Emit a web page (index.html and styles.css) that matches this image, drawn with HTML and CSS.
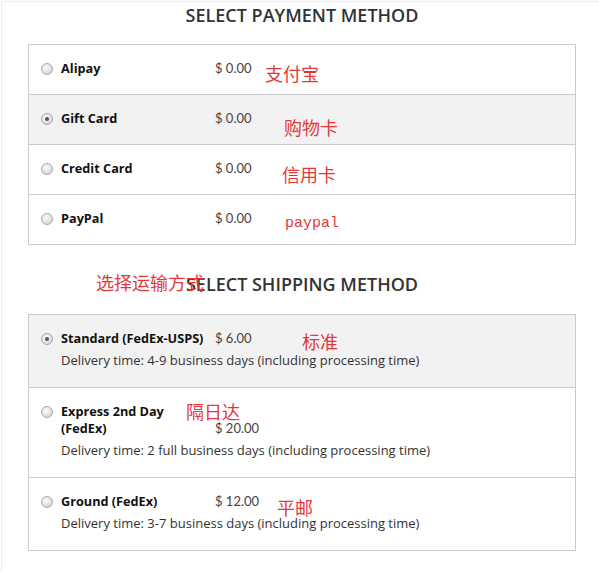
FILE: index.html
```html
<!DOCTYPE html>
<html lang="zh">
<head>
  <meta charset="UTF-8" />
  <meta name="viewport" content="width=device-width, initial-scale=1" />
  <title>Checkout - Payment &amp; Shipping</title>
  <link rel="stylesheet" href="styles.css">
</head>
<body>
  <div class="page">

    <section class="panel">
      <h2 class="panel-title">SELECT PAYMENT METHOD</h2>
      <ul class="options">
        <li class="option">
          <span class="radio"></span>
          <span class="name">Alipay</span>
          <span class="price">$ 0.00</span>
          <span class="note note-alipay">支付宝</span>
        </li>
        <li class="option selected">
          <span class="radio checked"></span>
          <span class="name">Gift Card</span>
          <span class="price">$ 0.00</span>
          <span class="note note-gift">购物卡</span>
        </li>
        <li class="option">
          <span class="radio"></span>
          <span class="name">Credit Card</span>
          <span class="price">$ 0.00</span>
          <span class="note note-credit">信用卡</span>
        </li>
        <li class="option">
          <span class="radio"></span>
          <span class="name">PayPal</span>
          <span class="price">$ 0.00</span>
          <span class="note note-paypal">paypal</span>
        </li>
      </ul>
    </section>

    <section class="panel">
      <h2 class="panel-title">
        SELECT SHIPPING METHOD
        <span class="note note-title">选择运输方式</span>
      </h2>
      <ul class="options shipping">
        <li class="option selected">
          <div class="line">
            <span class="radio checked"></span>
            <span class="name">Standard (FedEx-USPS)</span>
            <span class="price">$ 6.00</span>
          </div>
          <p class="delivery">Delivery time: 4-9 business days (including processing time)</p>
          <span class="note note-standard">标准</span>
        </li>
        <li class="option">
          <div class="line">
            <span class="radio"></span>
            <span class="name">Express 2nd Day<br />(FedEx)</span>
            <span class="price">$ 20.00</span>
          </div>
          <p class="delivery">Delivery time: 2 full business days (including processing time)</p>
          <span class="note note-express">隔日达</span>
        </li>
        <li class="option">
          <div class="line">
            <span class="radio"></span>
            <span class="name">Ground (FedEx)</span>
            <span class="price">$ 12.00</span>
          </div>
          <p class="delivery">Delivery time: 3-7 business days (including processing time)</p>
          <span class="note note-ground">平邮</span>
        </li>
      </ul>
    </section>

  </div>
</body>
</html>
```

FILE: styles.css
```css
body {
  margin: 0;
  background: #fff;
  font-family: "Open Sans", "Liberation Sans", sans-serif;
  color: #222;
}
.page {
  margin: 1px 0 0 1px;
  border-top: 1px solid #ececec;
  border-left: 1px solid #ececec;
  min-height: 570px;
}
.panel {
  margin-left: 26px;
  width: 548px;
}
.panel + .panel { margin-top: 26px; }
.panel-title {
  position: relative;
  margin: 0;
  padding: 2px 0 18px;
  text-align: center;
  font-size: 18px;
  line-height: 22px;
  font-weight: 600;
  color: #333;
}
.panel + .panel .panel-title { padding-bottom: 19px; }
.options {
  list-style: none;
  margin: 0;
  padding: 0;
  border: 1px solid #cbcbcb;
}
.option {
  position: relative;
  display: flex;
  align-items: flex-end;
  padding: 15px 11px 17px;
  line-height: 17px;
  font-size: 12.7px;
}
.option + .option { border-top: 1px solid #cbcbcb; }
.option.selected { background: #f2f2f2; }
.shipping .option {
  display: block;
  padding-bottom: 18px;
}
.line {
  display: flex;
  align-items: flex-end;
}
.radio {
  align-self: flex-start;
  flex: none;
  width: 10px;
  height: 10px;
  margin: 3px 8px 0 1px;
  border: 1px solid #a9a9a9;
  border-radius: 50%;
  background: radial-gradient(circle at 40% 35%, #fbfbfb 0%, #e2e2e2 55%, #c9c9c9 100%);
  box-sizing: content-box;
  position: relative;
}
.radio.checked::after {
  content: "";
  position: absolute;
  left: 3px;
  top: 3px;
  width: 4px;
  height: 4px;
  border-radius: 50%;
  background: #555;
}
.name {
  flex: none;
  width: 154px;
  font-weight: 700;
  color: #111;
}
.price {
  font-family: "Lato", "Liberation Sans", sans-serif;
  font-size: 13px;
  color: #444;
}
.delivery {
  margin: 4px 0 0 21px;
  line-height: 18px;
  font-size: 13px;
  color: #333;
}
.note {
  position: absolute;
  font-family: "Noto Sans CJK SC", sans-serif;
  font-size: 18px;
  line-height: 18px;
  font-weight: 400;
  color: #e2383c;
  white-space: nowrap;
}
.note-alipay { left: 236px; top: 19px; }
.note-gift { left: 255px; top: 23px; }
.note-credit { left: 253px; top: 20px; }
.note-paypal {
  left: 256px;
  top: 20px;
  font-family: "Liberation Mono", monospace;
  font-size: 15px;
}
.note-title { left: 68px; top: 2px; }
.note-standard { left: 273px; top: 17px; }
.note-express { left: 157px; top: 14px; }
.note-ground { left: 248px; top: 20px; }
```
